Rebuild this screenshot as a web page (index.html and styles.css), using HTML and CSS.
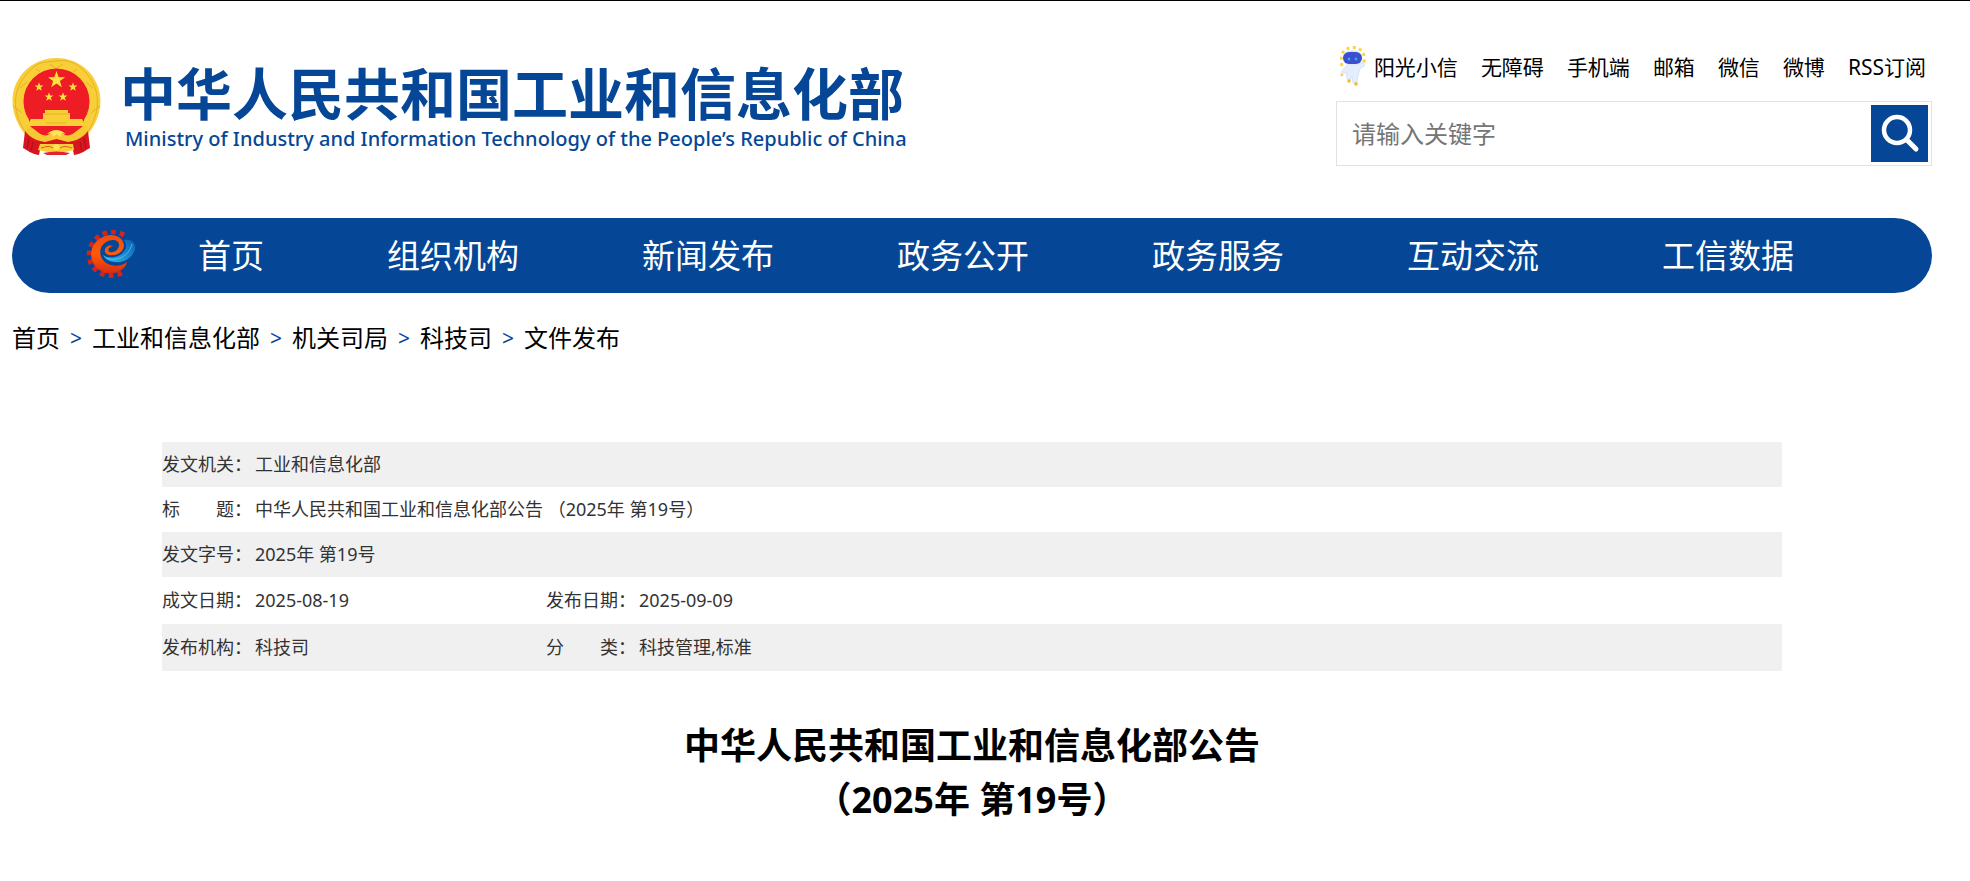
FILE: index.html
```html
<!DOCTYPE html>
<html lang="zh-CN">
<head>
<meta charset="utf-8">
<title>中华人民共和国工业和信息化部公告</title>
<link rel="stylesheet" href="styles.css">
</head>
<body>
<header class="header">
  <a class="brand" href="#">
    <svg class="emblem" viewBox="0 0 89 97" aria-hidden="true">
      <defs><path id="star" d="M0-10 2.4-3.1 9.5-3.1 3.8 1.2 5.9 8.1 0 4-5.9 8.1-3.8 1.2-9.5-3.1-2.4-3.1Z"/></defs>
      <path fill="#f8cf38" d="M44.500 0C69 0 88.500 19 88.500 43C88.500 58 81 70 76 76L76 90 13 90 13 76C8 70 .5 58 .5 43C.5 19 20 0 44.500 0Z"/>
      <path fill="none" stroke="#e3b02a" stroke-width="1" d="M15 76C0 56 0 34 13 18S30 5 44 3 68 6 78 20 89 56 74 76M1 48l9 7M88 48l-9 7M8 30l7-6M81 30l-7-6M24 11l4 3M65 11l-4 3M38 6l6 5 7-5"/>
      <circle cx="44.500" cy="43.500" r="33" fill="#ee1c25"/>
      <path fill="#ee1c25" d="M17 62H72L68 80H21Z"/>
      <g fill="#fde23c">
        <use href="#star" transform="translate(44.500 22) scale(.9)"/>
        <use href="#star" transform="translate(27 29) scale(.47)"/>
        <use href="#star" transform="translate(61 29) scale(.47)"/>
        <use href="#star" transform="translate(37 39) scale(.47)"/>
        <use href="#star" transform="translate(51 39) scale(.47)"/>
      </g>
      <path fill="#f9cf36" d="M33 52H56V55H58V61H31V55H33ZM19 61H70L74 68H15Z"/>
      <path stroke="#e3b02a" fill="none" d="M31 56H58M34 65h20"/>
      <path fill="#f8c832" d="M14 67C22 68 28 80 36 77 41 72 48 72 53 77 61 80 67 68 75 67L74 76C66 84 53 85 44.500 81 36 85 23 84 15 76Z"/>
      <path fill="#ffe45a" d="M35 76q9-8 19 0l-4-1-2 4-3-3-4 3-2-4Z"/>
      <path fill="#d91520" d="M13 73C19 81 27 83 33 84L44.500 81 56 84C62 83 70 81 76 73L78 90C74 92 70 96 62 97L60 87H29L27 97C19 96 15 92 11 90Z"/>
      <path stroke="#a90f18" fill="none" d="M17 80l-2 11M21 84l-2 9M72 80l2 11M68 84l2 9"/>
      <path fill="#f9cf36" d="M28 86H61L62 92Q44 97 26 92Z"/>
      <path fill="#e3242b" d="M31 95q13-3 27 0l-4 2H35Z"/>
      <path fill="none" stroke="#e3562b" d="M29 90q8-3 12 0M60 90q-8-3-12 0"/>
      <circle cx="44.500" cy="89" r="3" fill="#ffe45a"/>
    </svg>
    <span class="brand-text">
      <span class="brand-name">中华人民共和国工业和信息化部</span>
      <span class="brand-en">Ministry of Industry and Information Technology of the People’s Republic of China</span>
    </span>
  </a>
  <div class="tools">
    <nav class="quick" aria-label="快捷链接">
      <a class="assistant" href="#"><svg class="robot" viewBox="0 0 26 40" aria-hidden="true">
        <path fill="none" stroke="#ffd43b" stroke-width="3" stroke-dasharray="3 3.300" d="M2 20C-1 7 5 1.500 13 1.500S27 7 23 20"/>
        <path fill="#e4edfa" stroke="#cfdcf4" stroke-width=".7" d="M8 18Q13 15 18 18L23 16 25 19 20 23 18 30 17 37 13 37 12 30 10 35 7 33 6 26 2 29 1 26Z"/>
        <ellipse cx="12.500" cy="12" rx="10" ry="8" fill="#e0e8f8"/>
        <rect x="3" y="6" width="19" height="12" rx="6" fill="#3c50cf"/>
        <circle cx="9" cy="13" r="1.400" fill="#35a7f5"/><circle cx="16" cy="13" r="1.400" fill="#35a7f5"/>
        <circle cx="9" cy="35" r="1.700" fill="#f7b72e"/><circle cx="16" cy="38" r="1.800" fill="#f7b72e"/><circle cx="1.800" cy="29" r="1.300" fill="#f7c95e"/>
      </svg>阳光小信</a>
      <a href="#">无障碍</a>
      <a href="#">手机端</a>
      <a href="#">邮箱</a>
      <a href="#">微信</a>
      <a href="#">微博</a>
      <a href="#">RSS订阅</a>
    </nav>
    <form class="search" role="search">
      <input class="search-input" type="text" placeholder="请输入关键字" aria-label="请输入关键字">
      <button class="search-button" type="button" aria-label="搜索">
        <svg viewBox="0 0 57 57" aria-hidden="true"><circle cx="26" cy="25" r="13" fill="none" stroke="#fff" stroke-width="4.500"/><path d="M36 35 45 44" stroke="#fff" stroke-width="5" stroke-linecap="round"/></svg>
      </button>
    </form>
  </div>
</header>
<nav class="main-nav" aria-label="主导航">
  <svg class="gear" viewBox="0 0 50 48" aria-hidden="true">
    <defs>
      <linearGradient id="flame" x1="0" y1="0" x2="0" y2="1"><stop offset="0" stop-color="#f04a12"/><stop offset=".5" stop-color="#ff5a0a"/><stop offset="1" stop-color="#d92a12"/></linearGradient>
      <linearGradient id="wave" x1="0" y1="1" x2="1" y2="0"><stop offset="0" stop-color="#2fb4ea"/><stop offset="1" stop-color="#0a5fb4"/></linearGradient>
    </defs>
    <path fill="none" stroke="#d8221a" stroke-width="5" stroke-dasharray="4.500 4.300" d="M38 5C29 0 19 1 11 8 1 17 1 31 9 39 17 47 29 47 38 42"/>
    <path fill="url(#flame)" d="M38 15C37 7 28 3 19 6 8 10 3 20 6 30 9 41 21 46 32 42 36 40 40 37 41 32 35 37 25 37 19 32 12 26 13 16 20 12 26 8 34 10 33 16 32 20 28 23 24 22 21 21 22 17 27 16 22 14 18 18 19 22 21 28 38 26 38 15Z"/>
    <path fill="url(#wave)" d="M17 25C24 30 35 27 39 20 41 16 40 13 38 10 46 9 50 13 49 19 46 29 37 33 28 32 22 31 18 28 17 25Z"/>
    <path fill="none" stroke="#5cc6f1" stroke-width=".8" d="M20 28c10 4 23-1 26-14"/>
  </svg>
  <a href="#">首页</a>
  <a href="#">组织机构</a>
  <a href="#">新闻发布</a>
  <a href="#">政务公开</a>
  <a href="#">政务服务</a>
  <a href="#">互动交流</a>
  <a href="#">工信数据</a>
</nav>
<nav class="crumbs" aria-label="当前位置">
  <a href="#">首页</a><span class="sep">&gt;</span><a href="#">工业和信息化部</a><span class="sep">&gt;</span><a href="#">机关司局</a><span class="sep">&gt;</span><a href="#">科技司</a><span class="sep">&gt;</span><a href="#">文件发布</a>
</nav>
<main class="article">
  <table class="meta">
    <colgroup><col class="col-label"><col class="col-value"><col class="col-label"><col></colgroup>
    <tbody>
      <tr><th scope="row">发文机关：</th><td colspan="3">工业和信息化部</td></tr>
      <tr><th scope="row">标&emsp;&emsp;题：</th><td colspan="3">中华人民共和国工业和信息化部公告 （2025年 第19号）</td></tr>
      <tr><th scope="row">发文字号：</th><td colspan="3">2025年 第19号</td></tr>
      <tr class="tall"><th scope="row">成文日期：</th><td>2025-08-19</td><th scope="row">发布日期：</th><td>2025-09-09</td></tr>
      <tr class="tall"><th scope="row">发布机构：</th><td>科技司</td><th scope="row">分&emsp;&emsp;类：</th><td>科技管理,标准</td></tr>
    </tbody>
  </table>
  <h1 class="title">中华人民共和国工业和信息化部公告<br>（2025年 第19号）</h1>
</main>
</body>
</html>
```
FILE: styles.css
```css
* {
  box-sizing: border-box;
}

body {
  margin: 0;
  padding: 0 38px 0 12px;
  background: #fff;
  border-top: 1px solid #000;
  color: #000;
  font-family: "Noto Sans", "Noto Sans CJK SC", sans-serif;
}

a {
  color: inherit;
  text-decoration: none;
  white-space: nowrap;
}

.header {
  display: flex;
  justify-content: space-between;
  padding-top: 45px;
}

.brand {
  display: flex;
  align-items: flex-start;
  gap: 19px;
  padding-top: 12px;
  color: #054796;
}

.emblem {
  width: 89px;
  height: 97px;
}

.brand-text {
  display: flex;
  flex-direction: column;
}

.brand-name {
  font-size: 56px;
  line-height: 70px;
  font-weight: 700;
}

.brand-en {
  padding-left: 5px;
  font-size: 20px;
  line-height: 22px;
  font-weight: 500;
}

.tools {
  width: 596px;
}

.quick {
  display: flex;
  align-items: center;
  justify-content: flex-end;
  gap: 23px;
  height: 40px;
  padding-right: 6px;
  font-size: 21px;
}

.assistant {
  display: flex;
  align-items: center;
  gap: 8px;
}

.robot {
  width: 26px;
  height: 40px;
}

.search {
  display: flex;
  align-items: center;
  height: 65px;
  margin-top: 15px;
  padding: 0 3px 0 0;
  border: 1px solid #e2e2e2;
}

.search-input {
  flex: 1;
  min-width: 0;
  height: 57px;
  padding: 0 15px;
  border: 0;
  background: none;
  font: inherit;
  font-size: 24px;
}

.search-input::placeholder {
  color: #757575;
}

.search-button {
  width: 57px;
  height: 57px;
  padding: 0;
  border: 0;
  background: #054796;
}

.search-button svg {
  display: block;
}

.main-nav {
  display: flex;
  align-items: center;
  gap: 123px;
  height: 75px;
  margin-top: 52px;
  padding: 0 0 3px 74px;
  border-radius: 38px;
  background: #054796;
  color: #fff;
  font-size: 33px;
}

.gear {
  flex: none;
  width: 50px;
  height: 48px;
  margin-right: -61px;
}

.crumbs {
  display: flex;
  gap: 10px;
  margin-top: 27px;
  font-size: 24px;
  line-height: 36px;
}

.sep {
  color: #054796;
  font-size: 21px;
}

.article {
  margin: 86px 150px 0;
}

.meta {
  width: 100%;
  table-layout: fixed;
  border-collapse: collapse;
  color: #333;
  font-size: 18px;
  line-height: 27px;
}

.col-label {
  width: 93px;
}

.col-value {
  width: 291px;
}

.meta tr {
  height: 45px;
}

.meta .tall {
  height: 47px;
}

.meta tr:nth-child(odd) {
  background: #f0f0f0;
}

.meta th,
.meta td {
  padding: 0;
  font-weight: 400;
  text-align: left;
  white-space: nowrap;
}

.title {
  margin: 48px 0 0;
  font-size: 36px;
  line-height: 54px;
  font-weight: 700;
  text-align: center;
}
```
